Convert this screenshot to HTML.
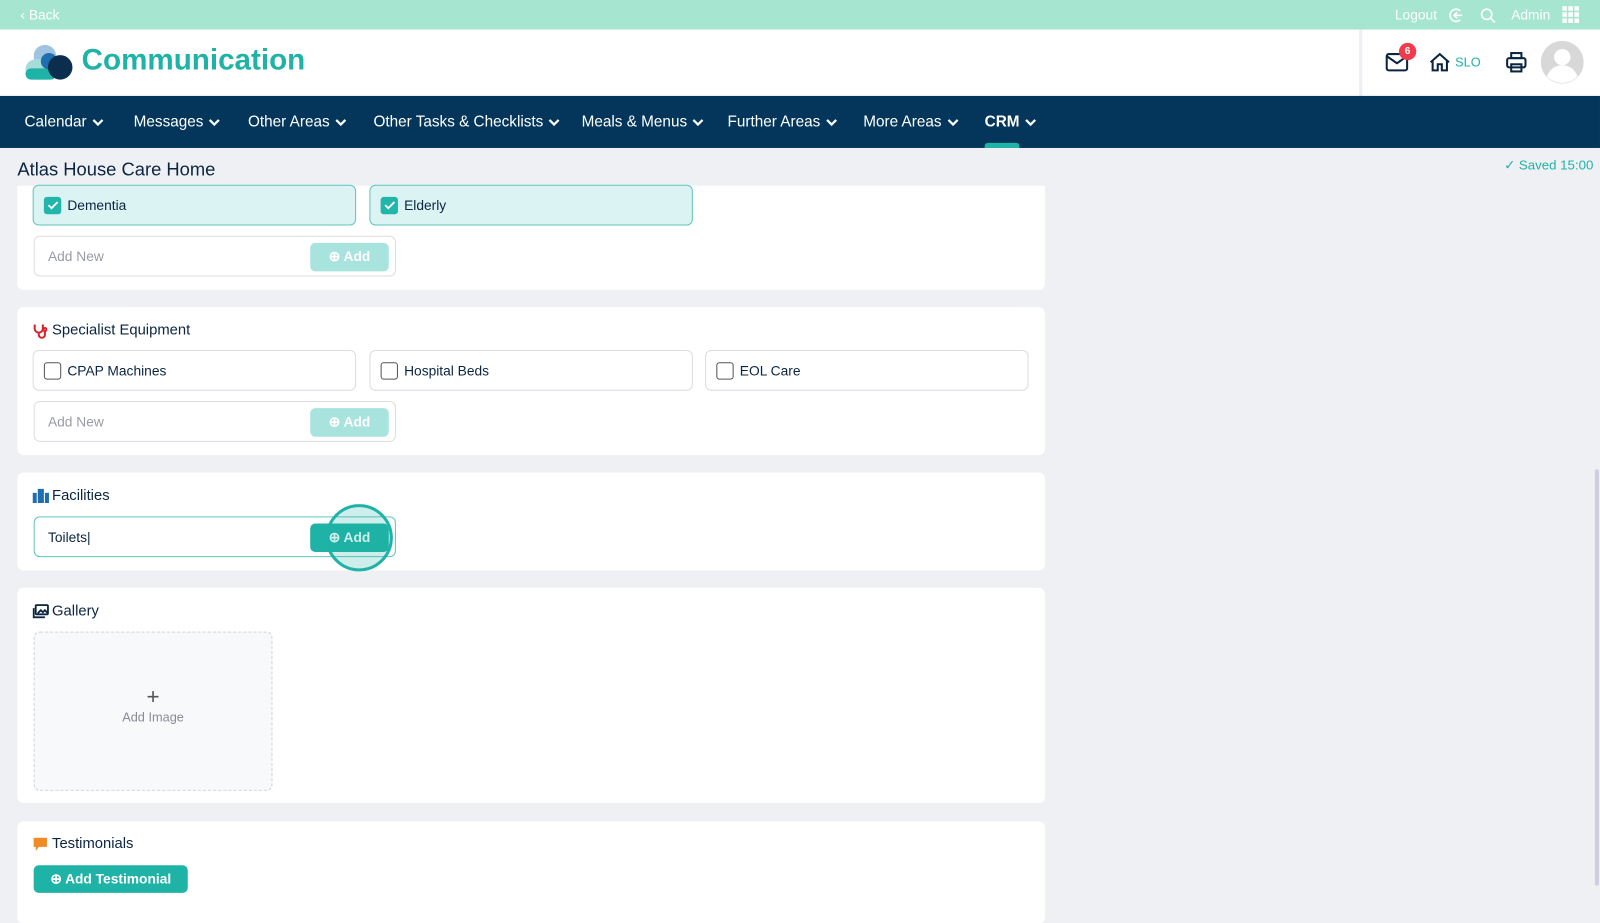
<!DOCTYPE html>
<html><head><meta charset="utf-8"><style>
*{box-sizing:border-box;margin:0;padding:0}
body{width:1600px;height:900px;overflow:hidden;background:#eff0f4;font-family:"Liberation Sans",sans-serif;color:#0b2540;position:relative}
#w{position:absolute;left:0;top:0;width:1568px;height:882px;transform:scale(1.0204);transform-origin:0 0}
.abs{position:absolute}
.top{left:0;top:0;width:1568px;height:29px;background:#a6e6d0;color:#fff;font-size:13.5px}
.hdr{left:0;top:29px;width:1568px;height:65px;background:#fff}
.nav{left:0;top:94px;width:1568px;height:51px;background:#03365a;color:#fff;font-size:15px}
.nav span{position:absolute;top:17px;white-space:nowrap}
.nav svg{vertical-align:middle;margin-left:5px}
.card{position:absolute;left:17px;width:1007px;background:#fff;border-radius:6px}
.h{position:absolute;left:35px;font-size:14.5px;color:#0b2540}
.opt{position:absolute;height:40px;width:317px;border:1px solid #dcdde3;border-radius:6px;background:#fff;font-size:13.5px}
.opt.on{background:#dcf3f3;border-color:#5fc6bd}
.opt .cb{position:absolute;left:10px;top:11px;width:17px;height:17px;border:1.5px solid #555;border-radius:3px;background:#fff}
.opt.on .cb{background:#22b5a9;border-color:#22b5a9}
.opt .t{position:absolute;left:33px;top:12px}
.inp{position:absolute;left:33px;width:355px;height:40px;border:1px solid #dcdde3;border-radius:6px;background:#fff;font-size:13.5px;color:#9a9ca5}
.inp .t{position:absolute;left:13px;top:12px}
.btn{position:absolute;right:6px;top:6px;width:77px;height:28px;border-radius:5px;background:#a9e3de;color:#fff;font-size:13.5px;font-weight:bold;text-align:center;line-height:28px}
</style></head><body><div id="w">
<div class="abs top"><span class="abs" style="left:20px;top:7px">‹ Back</span>
<span class="abs" style="left:1367px;top:7px">Logout</span>
<svg class="abs" style="left:1419px;top:7px" width="16" height="16" viewBox="0 0 16 16" fill="none" stroke="#fff" stroke-width="1.6"><path d="M12 3.5A6 6 0 1 0 12 12.5"/><path d="M14 8H6M9 5L6 8l3 3"/></svg>
<svg class="abs" style="left:1450px;top:7px" width="16" height="16" viewBox="0 0 16 16" fill="none" stroke="#fff" stroke-width="1.6"><circle cx="7" cy="7" r="5"/><path d="M11 11l4 4"/></svg>
<span class="abs" style="left:1481px;top:7px">Admin</span>
<svg class="abs" style="left:1531px;top:6px" width="17" height="17" viewBox="0 0 17 17" fill="#fff"><rect x="0" y="0" width="4.5" height="4.5"/><rect x="6" y="0" width="4.5" height="4.5"/><rect x="12" y="0" width="4.5" height="4.5"/><rect x="0" y="6" width="4.5" height="4.5"/><rect x="6" y="6" width="4.5" height="4.5"/><rect x="12" y="6" width="4.5" height="4.5"/><rect x="0" y="12" width="4.5" height="4.5"/><rect x="6" y="12" width="4.5" height="4.5"/><rect x="12" y="12" width="4.5" height="4.5"/></svg>
</div>
<div class="abs hdr">
<svg class="abs" style="left:24px;top:14px" width="48" height="36" viewBox="0 0 48 36"><circle cx="20" cy="12" r="11" fill="#9fc3e0"/><rect x="1" y="15" width="30" height="20" rx="10" fill="#a6ddd9"/><rect x="1" y="24" width="30" height="11" rx="5.5" fill="#1eb3a6"/><circle cx="24" cy="17" r="8" fill="#1d6fb0"/><circle cx="35" cy="23" r="12" fill="#0b2d4e"/></svg>
<span class="abs" style="left:80px;top:14px;font-size:29px;font-weight:bold;color:#1eb3a6">Communication</span>
<div class="abs" style="left:1332px;top:0;width:3px;height:65px;background:#eceef1"></div>
<svg class="abs" style="left:1357px;top:22px" width="24" height="20" viewBox="0 0 24 20" fill="none" stroke="#0b2540" stroke-width="2"><rect x="2" y="2" width="20" height="16" rx="2"/><path d="M2 4l10 7 10-7"/></svg>
<div class="abs" style="left:1371px;top:13px;width:17px;height:17px;border-radius:50%;background:#ef3b4c;color:#fff;font-size:10px;font-weight:bold;text-align:center;line-height:17px">6</div>
<svg class="abs" style="left:1400px;top:22px" width="22" height="20" viewBox="0 0 22 20" fill="none" stroke="#0b2540" stroke-width="2"><path d="M2 10L11 2l9 8M4 8v10h5v-6h4v6h5V8"/></svg>
<span class="abs" style="left:1426px;top:25px;font-size:12.5px;color:#1eb3a6">SLO</span>
<svg class="abs" style="left:1475px;top:21px" width="22" height="22" viewBox="0 0 22 22" fill="none" stroke="#0b2540" stroke-width="2"><rect x="6" y="2" width="10" height="5"/><rect x="2" y="7" width="18" height="9" rx="2"/><rect x="6" y="13" width="10" height="7"/></svg>
<svg class="abs" style="left:1510px;top:11px" width="42" height="42" viewBox="0 0 42 42"><circle cx="21" cy="21" r="21" fill="#d8d8d8"/><circle cx="21" cy="16" r="8" fill="#fff"/><path d="M6 35c3-8 9-11 15-11s12 3 15 11a21 21 0 0 1-30 0z" fill="#fff"/></svg>
</div>
<div class="abs nav">
<span style="left:24px">Calendar<svg width="12" height="8" viewBox="0 0 12 8"><path d="M1.5 1.5L6 6l4.5-4.5" stroke="#fff" stroke-width="2.2" fill="none"/></svg></span>
<span style="left:131px">Messages<svg width="12" height="8" viewBox="0 0 12 8"><path d="M1.5 1.5L6 6l4.5-4.5" stroke="#fff" stroke-width="2.2" fill="none"/></svg></span>
<span style="left:243px">Other Areas<svg width="12" height="8" viewBox="0 0 12 8"><path d="M1.5 1.5L6 6l4.5-4.5" stroke="#fff" stroke-width="2.2" fill="none"/></svg></span>
<span style="left:366px">Other Tasks &amp; Checklists<svg width="12" height="8" viewBox="0 0 12 8"><path d="M1.5 1.5L6 6l4.5-4.5" stroke="#fff" stroke-width="2.2" fill="none"/></svg></span>
<span style="left:570px">Meals &amp; Menus<svg width="12" height="8" viewBox="0 0 12 8"><path d="M1.5 1.5L6 6l4.5-4.5" stroke="#fff" stroke-width="2.2" fill="none"/></svg></span>
<span style="left:713px">Further Areas<svg width="12" height="8" viewBox="0 0 12 8"><path d="M1.5 1.5L6 6l4.5-4.5" stroke="#fff" stroke-width="2.2" fill="none"/></svg></span>
<span style="left:846px">More Areas<svg width="12" height="8" viewBox="0 0 12 8"><path d="M1.5 1.5L6 6l4.5-4.5" stroke="#fff" stroke-width="2.2" fill="none"/></svg></span>
<span style="left:965px;font-weight:bold">CRM<svg width="12" height="8" viewBox="0 0 12 8"><path d="M1.5 1.5L6 6l4.5-4.5" stroke="#fff" stroke-width="2.2" fill="none"/></svg></span>
<div class="abs" style="left:965px;top:46px;width:34px;height:5px;border-radius:3px 3px 0 0;background:#1eb3a6"></div>
</div>
<div class="abs" style="left:17px;top:156px;font-size:18px;color:#0b2540">Atlas House Care Home</div>
<div class="abs" style="left:1474px;top:154px;font-size:13px;color:#1eb3a6">✓ Saved 15:00</div>
<div class="abs" style="left:1563px;top:460px;width:4px;height:408px;border-radius:2px;background:#cdcfdc"></div>

<div class="card" style="top:182px;height:102px;border-radius:0 0 6px 6px"></div>
<div class="opt on" style="left:32px;top:181px"><div class="cb"></div><svg class="abs" style="left:13px;top:14px" width="12" height="10" viewBox="0 0 12 10"><path d="M1.5 5l3 3 6-6" stroke="#fff" stroke-width="1.8" fill="none"/></svg><span class="t">Dementia</span></div>
<div class="opt on" style="left:362px;top:181px"><div class="cb"></div><svg class="abs" style="left:13px;top:14px" width="12" height="10" viewBox="0 0 12 10"><path d="M1.5 5l3 3 6-6" stroke="#fff" stroke-width="1.8" fill="none"/></svg><span class="t">Elderly</span></div>
<div class="inp" style="top:231px"><span class="t">Add New</span><div class="btn">⊕ Add</div></div>

<div class="card" style="top:301px;height:145px"></div>
<svg class="abs" style="left:32px;top:316px" width="16" height="16" viewBox="0 0 16 16" fill="none" stroke="#d9232e" stroke-width="2"><path d="M2 2v4a4 4 0 0 0 8 0V2M6 10v2a3 3 0 0 0 6 0V9"/><circle cx="12" cy="7" r="1.5"/></svg>
<div class="h" style="left:51px;top:316px">Specialist Equipment</div>
<div class="opt" style="left:32px;top:343px"><div class="cb"></div><span class="t">CPAP Machines</span></div>
<div class="opt" style="left:362px;top:343px"><div class="cb"></div><span class="t">Hospital Beds</span></div>
<div class="opt" style="left:691px;top:343px"><div class="cb"></div><span class="t">EOL Care</span></div>
<div class="inp" style="top:393px"><span class="t">Add New</span><div class="btn">⊕ Add</div></div>

<div class="card" style="top:463px;height:96px"></div>
<svg class="abs" style="left:32px;top:479px" width="16" height="14" viewBox="0 0 16 14" fill="#1d6fb0"><rect x="0" y="4" width="4" height="10"/><rect x="5" y="0" width="6" height="14"/><rect x="12" y="4" width="4" height="10"/></svg>
<div class="h" style="left:51px;top:478px">Facilities</div>
<div class="inp" style="top:506px;border-color:#5fc6bd;color:#0b2540"><span class="t">Toilets|</span><div class="btn" style="background:#1eb3a6">⊕ Add</div></div>
<div class="abs" style="left:319px;top:494px;width:66px;height:66px;border-radius:50%;border:3px solid #1eb3a6;background:rgba(30,179,166,0.22)"></div>

<div class="card" style="top:576px;height:211px"></div>
<svg class="abs" style="left:32px;top:592px" width="16" height="14" viewBox="0 0 16 14" fill="none" stroke="#0b2540" stroke-width="1.8"><rect x="3" y="1" width="12" height="9" rx="1"/><path d="M1 4v9h11"/><path d="M5 9l3-3 2 2 2-2 3 3" /></svg>
<div class="h" style="left:51px;top:591px">Gallery</div>
<div class="abs" style="left:33px;top:619px;width:234px;height:156px;border:1.5px dashed #cfd1d8;border-radius:6px;background:#f8f9fb;text-align:center;color:#8a8c95;font-size:12.5px"><div style="font-size:22px;color:#555;margin-top:50px;line-height:26px">+</div><div>Add Image</div></div>

<div class="card" style="top:805px;height:100px"></div>
<svg class="abs" style="left:32px;top:820px" width="15" height="15" viewBox="0 0 15 15"><path d="M1 1h13v9H6l-3 4v-4H1z" fill="#f08a24"/></svg>
<div class="h" style="left:51px;top:819px">Testimonials</div>
<div class="abs" style="left:33px;top:848px;width:151px;height:27px;border-radius:5px;background:#1eb3a6;color:#fff;font-size:13.5px;font-weight:bold;line-height:27px;text-align:center">⊕ Add Testimonial</div>
</div></body></html>
